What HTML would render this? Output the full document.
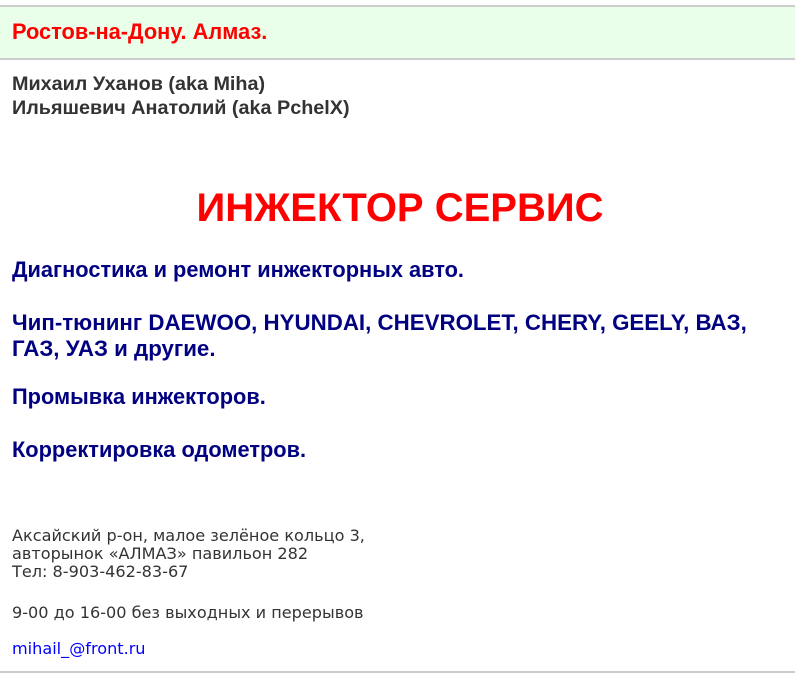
<!DOCTYPE html>
<html><head><meta charset="utf-8"><style>
body{margin:0;width:795px;height:681px;background:#fff;position:relative;overflow:hidden;font-family:"Liberation Sans",Arial,sans-serif}
.a{position:absolute;white-space:nowrap}
.band{position:absolute;left:0;top:5px;width:795px;height:51px;background:#eaffea;border-top:2px solid #ccc;border-bottom:2px solid #ccc}
.b{font-weight:bold;font-size:21.8px;color:#000080;left:12px}
.s{font-family:"DejaVu Sans",Verdana,sans-serif;font-size:16.1px;color:#333;left:12px}
</style></head><body>
<div class="band"></div>
<div class="a" style="left:12px;top:19px;font-size:21.8px;font-weight:bold;color:#f00">Ростов-на-Дону. Алмаз.</div>
<div class="a" style="left:12px;top:72px;font-size:19.8px;font-weight:bold;color:#333;line-height:24px">Михаил Уханов (aka Miha)<br>Ильяшевич Анатолий (aka PchelX)</div>
<div class="a" style="left:0;width:800px;text-align:center;top:186px;font-size:40px;font-weight:bold;color:#f00">ИНЖЕКТОР СЕРВИС</div>
<div class="a b" style="top:257px">Диагностика и ремонт инжекторных авто.</div>
<div class="a b" style="top:310px;line-height:26px;font-size:22.3px">Чип-тюнинг DAEWOO, HYUNDAI, CHEVROLET, CHERY, GEELY, ВАЗ,<br>ГАЗ, УАЗ и другие.</div>
<div class="a b" style="top:384px">Промывка инжекторов.</div>
<div class="a b" style="top:437px">Корректировка одометров.</div>
<div class="a s" style="top:527px;line-height:18px">Аксайский р-он, малое зелёное кольцо 3,<br>авторынок «АЛМАЗ» павильон 282<br>Тел: 8-903-462-83-67</div>
<div class="a s" style="top:603px">9-00 до 16-00 без выходных и перерывов</div>
<div class="a s" style="top:639px;color:#00f">mihail_@front.ru</div>
<div class="a" style="left:0;top:671px;width:795px;height:2px;background:#ccc"></div>
</body></html>
